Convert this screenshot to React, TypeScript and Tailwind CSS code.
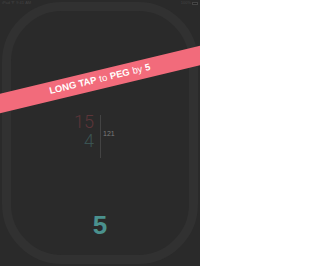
export default function App() {
  return (
    <div className="relative w-[200px] h-[266px] overflow-hidden bg-[#2a2a2a] font-['Liberation_Sans',Arial,sans-serif]">
      {/* status bar */}
      <div className="absolute top-0 left-0 right-0 flex justify-between items-center px-[2px] h-[6px] text-[4px] leading-none text-[#444]">
        <span>iPad ᯤ 9:41 AM</span>
        <span className="flex items-center gap-[1px]">
          100%
          <span className="w-[6px] h-[3px] border-[0.5px] border-[#444] bg-[#222]" />
        </span>
      </div>

      <div className="h-full p-[2px]">
        <div className="h-full rounded-[60px] border-[9px] border-[#313131] flex flex-col items-center">
          <div className="mt-[101px] flex items-start">
            <div className="w-[41px] pr-[6px] flex flex-col items-end text-[18px] leading-[19px] font-light font-['Roboto',sans-serif]">
              <span className="text-[#5c3539]">15</span>
              <span className="text-[#3a5352]">4</span>
            </div>
            <div className="mt-[3px] w-px h-[43px] bg-[#434343]" />
            <div className="w-[40px] pl-[2px] mt-[18px] text-[7px] leading-none text-[#7a7a7a]">
              121
            </div>
          </div>
          <div className="mt-[54px] text-[26px] leading-none font-bold text-[#4a918e]">
            5
          </div>
        </div>
      </div>

      {/* banner */}
      <div className="absolute left-[-30px] top-[70px] w-[260px] h-[19px] rotate-[-13.5deg] bg-[#f26b7b] flex items-center justify-center text-[9.5px] text-white whitespace-nowrap">
        <span className="font-bold">LONG TAP</span>
        <span className="font-light mx-[3px]">to</span>
        <span className="font-bold">PEG</span>
        <span className="font-light mx-[3px]">by</span>
        <span className="font-bold">5</span>
      </div>
    </div>
  );
}
